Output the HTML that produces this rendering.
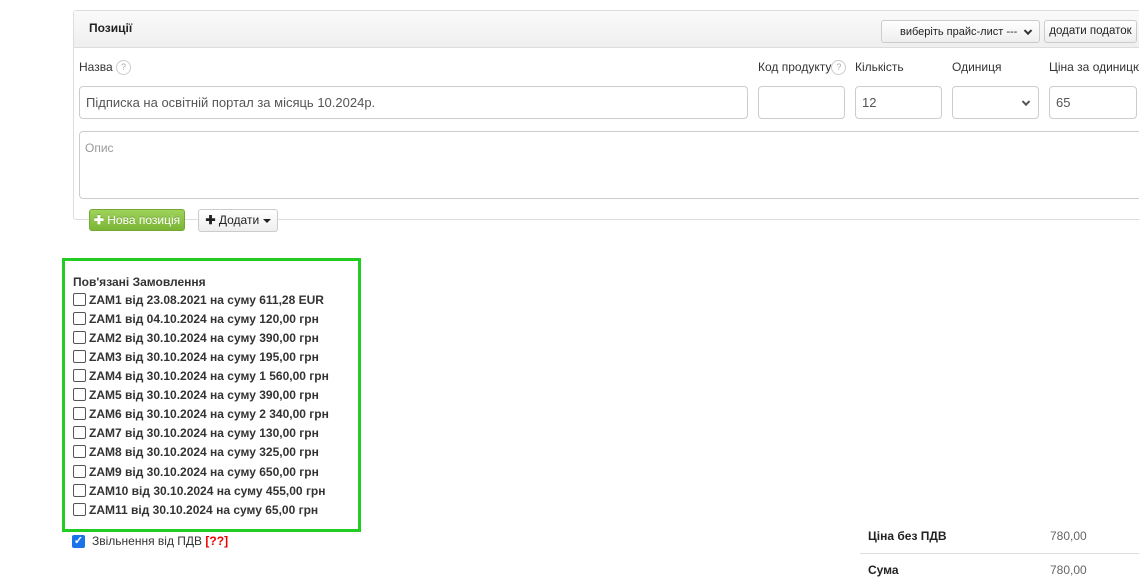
<!DOCTYPE html>
<html><head><meta charset="utf-8"><style>
*{box-sizing:border-box;margin:0;padding:0}
body{width:1139px;height:580px;overflow:hidden;background:#fff;font-family:"Liberation Sans",Arial,sans-serif;font-size:12px;color:#333;position:relative}
.a{position:absolute;white-space:nowrap}
.panel{left:73px;top:10px;width:1080px;height:210px;border:1px solid #ddd;border-radius:3px}
.hdr{left:74px;top:11px;width:1080px;height:37px;background:linear-gradient(#fafafa,#efefef);border-bottom:1px solid #ddd}
.inp{border:1px solid #ccc;border-radius:4px;background:#fff;height:33px;font-size:13px;color:#555;padding:8px 6px;line-height:16px}
.lbl{font-size:12px;color:#333;top:60px}
.q{display:inline-block;width:15px;height:15px;border:1px solid #ccc;border-radius:50%;font-size:9px;color:#aaa;text-align:center;line-height:13px;vertical-align:middle}
.btn{border:1px solid #ccc;border-radius:3px;background:linear-gradient(#fff,#eee);font-size:12px;color:#333;text-align:center}
.green{left:62px;top:258px;width:299px;height:274px;border:3px solid #22cc22}
.row{left:73px;font-size:12px;font-weight:bold;color:#333;height:19px;line-height:16px}
.cb{display:inline-block;width:13px;height:13px;border:1px solid #555;border-radius:2px;vertical-align:-2px;margin-right:3px;background:#fff}
.chev{position:absolute;right:6px;top:50%;width:6px;height:6px;border-right:2px solid #333;border-bottom:2px solid #333;transform:translateY(-70%) rotate(45deg)}
</style></head><body>
<div class="a panel"></div>
<div class="a hdr"></div>
<div class="a" style="left:89px;top:21px;font-size:12px;font-weight:bold;color:#222">Позиції</div>
<div class="a btn" style="left:881px;top:20px;width:159px;height:23px;line-height:23px;padding-left:18px;text-align:left;color:#222;font-size:11px">виберіть прайс-лист ---<span class="chev" style="right:8px"></span></div>
<div class="a btn" style="left:1044px;top:20px;width:93px;height:23px;line-height:21px;color:#222;font-size:11.5px">додати податок</div>

<div class="a lbl" style="left:79px">Назва <span class="q">?</span></div>
<div class="a lbl" style="left:758px">Код продукту<span class="q">?</span></div>
<div class="a lbl" style="left:855px">Кількість</div>
<div class="a lbl" style="left:952px">Одиниця</div>
<div class="a lbl" style="left:1049px">Ціна за одиницю</div>

<div class="a inp" style="left:79px;top:86px;width:669px">Підписка на освітній портал за місяць 10.2024р.</div>
<div class="a inp" style="left:758px;top:86px;width:87px"></div>
<div class="a inp" style="left:855px;top:86px;width:87px">12</div>
<div class="a inp" style="left:952px;top:86px;width:87px"><span class="chev" style="right:9px;border-color:#555"></span></div>
<div class="a inp" style="left:1049px;top:86px;width:88px">65</div>
<div class="a inp" style="left:79px;top:131px;width:1070px;height:68px;color:#999;font-size:12px;padding:8px 5px">Опис</div>

<div class="a" style="left:89px;top:209px;width:96px;height:22px;border-radius:3px;background:linear-gradient(#9fd35a,#7bb536);border:1px solid #74a832;color:#fff;font-size:12px;line-height:20px;text-align:center;text-shadow:0 -1px 0 rgba(0,0,0,.2)"><b>✚</b> Нова позиція</div>
<div class="a btn" style="left:198px;top:209px;width:80px;height:23px;line-height:21px;color:#222"><b>✚</b> Додати <span style="display:inline-block;border-left:4px solid transparent;border-right:4px solid transparent;border-top:4px solid #222;vertical-align:middle"></span></div>

<div class="a green"></div>
<div class="a row" style="top:274px">Пов'язані Замовлення</div>
<div class="a row" style="top:292px"><span class="cb"></span>ZAM1 від 23.08.2021 на суму 611,28 EUR</div>
<div class="a row" style="top:311px"><span class="cb"></span>ZAM1 від 04.10.2024 на суму 120,00 грн</div>
<div class="a row" style="top:330px"><span class="cb"></span>ZAM2 від 30.10.2024 на суму 390,00 грн</div>
<div class="a row" style="top:349px"><span class="cb"></span>ZAM3 від 30.10.2024 на суму 195,00 грн</div>
<div class="a row" style="top:368px"><span class="cb"></span>ZAM4 від 30.10.2024 на суму 1 560,00 грн</div>
<div class="a row" style="top:387px"><span class="cb"></span>ZAM5 від 30.10.2024 на суму 390,00 грн</div>
<div class="a row" style="top:406px"><span class="cb"></span>ZAM6 від 30.10.2024 на суму 2 340,00 грн</div>
<div class="a row" style="top:425px"><span class="cb"></span>ZAM7 від 30.10.2024 на суму 130,00 грн</div>
<div class="a row" style="top:444px"><span class="cb"></span>ZAM8 від 30.10.2024 на суму 325,00 грн</div>
<div class="a row" style="top:464px"><span class="cb"></span>ZAM9 від 30.10.2024 на суму 650,00 грн</div>
<div class="a row" style="top:483px"><span class="cb"></span>ZAM10 від 30.10.2024 на суму 455,00 грн</div>
<div class="a row" style="top:502px"><span class="cb"></span>ZAM11 від 30.10.2024 на суму 65,00 грн</div>

<div class="a" style="left:72px;top:535px;width:13px;height:13px;background:#1a73e8;border-radius:2px;color:#fff;font-size:11px;line-height:13px;text-align:center;font-weight:bold">✓</div>
<div class="a" style="left:92px;top:534px;font-size:12px;color:#333">Звільнення від ПДВ <b style="color:#e00">[??]</b></div>

<div class="a" style="left:868px;top:529px;font-size:12px;font-weight:bold;color:#222">Ціна без ПДВ</div>
<div class="a" style="left:1050px;top:529px;font-size:12px;color:#666">780,00</div>
<div class="a" style="left:860px;top:553px;width:279px;height:1px;background:#ddd"></div>
<div class="a" style="left:868px;top:563px;font-size:12px;font-weight:bold;color:#222">Сума</div>
<div class="a" style="left:1050px;top:563px;font-size:12px;color:#666">780,00</div>
</body></html>
